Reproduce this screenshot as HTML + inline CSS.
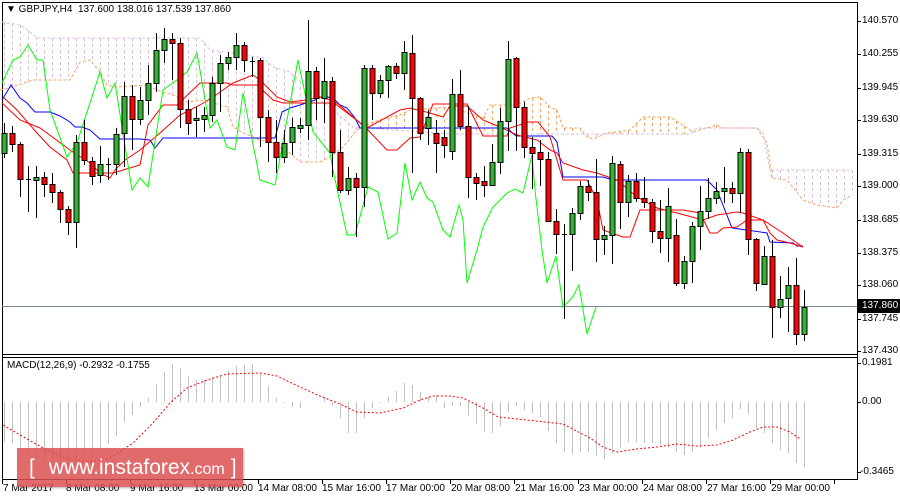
<!DOCTYPE html>
<html><head><meta charset="utf-8"><style>
html,body{margin:0;padding:0;background:#fff;width:900px;height:500px;overflow:hidden}
body{position:relative;font-family:"Liberation Sans",sans-serif;font-size:10px;color:#000}
svg{position:absolute;left:0;top:0}
.t{position:absolute;white-space:nowrap;font-size:10px;line-height:10px}
#wm{position:absolute;left:17px;top:448px;width:226px;height:39px;background:rgba(220,80,80,0.85);box-shadow:1px 1px 2px rgba(0,0,0,0.3);color:#fff;font-size:21px;line-height:39px;white-space:nowrap}
</style></head><body>
<svg id="s" width="900" height="500" xmlns="http://www.w3.org/2000/svg"></svg>
<div class="t" style="left:6px;top:5px;font-size:10px">&#9660; GBPJPY,H4&nbsp; 137.600 138.016 137.539 137.860</div>
<div class="t" style="left:7px;top:361px">MACD(12,26,9) -0.2932 -0.1755</div>
<div class="t" style="left:862px;top:16px">140.570</div>
<div class="t" style="left:862px;top:49px">140.255</div>
<div class="t" style="left:862px;top:83px">139.945</div>
<div class="t" style="left:862px;top:115px">139.630</div>
<div class="t" style="left:862px;top:149px">139.315</div>
<div class="t" style="left:862px;top:181px">139.000</div>
<div class="t" style="left:862px;top:215px">138.685</div>
<div class="t" style="left:862px;top:248px">138.375</div>
<div class="t" style="left:862px;top:280px">138.060</div>
<div class="t" style="left:862px;top:314px">137.745</div>
<div class="t" style="left:862px;top:346px">137.430</div>
<div style="position:absolute;left:858px;top:299px;width:42px;height:14px;background:#000"></div>
<div class="t" style="left:862px;top:301px;color:#fff">137.860</div>
<div class="t" style="left:862px;top:358px">0.1981</div>
<div class="t" style="left:862px;top:397px">0.00</div>
<div class="t" style="left:860px;top:467px">-0.3465</div>
<div class="t" style="left:3px;top:484px">7 Mar 2017</div>
<div class="t" style="left:66px;top:484px">8 Mar 08:00</div>
<div class="t" style="left:130px;top:484px">9 Mar 16:00</div>
<div class="t" style="left:194px;top:484px">13 Mar 00:00</div>
<div class="t" style="left:258px;top:484px">14 Mar 08:00</div>
<div class="t" style="left:322px;top:484px">15 Mar 16:00</div>
<div class="t" style="left:386px;top:484px">17 Mar 00:00</div>
<div class="t" style="left:451px;top:484px">20 Mar 08:00</div>
<div class="t" style="left:515px;top:484px">21 Mar 16:00</div>
<div class="t" style="left:579px;top:484px">23 Mar 00:00</div>
<div class="t" style="left:643px;top:484px">24 Mar 08:00</div>
<div class="t" style="left:707px;top:484px">27 Mar 16:00</div>
<div class="t" style="left:771px;top:484px">29 Mar 00:00</div>
<div id="wm"><span style="margin-left:12px">[</span><span style="margin-left:14px">www.instaforex</span><span style="font-size:16px">.com</span><span style="margin-left:6px">]</span></div>
<script>
var s=document.getElementById('s'),h='';
function L(x1,y1,x2,y2,c,w,d){h+='<line x1="'+x1+'" y1="'+y1+'" x2="'+x2+'" y2="'+y2+'" stroke="'+c+'" stroke-width="'+(w||1)+'"'+(d?' stroke-dasharray="'+d+'"':'')+'/>';}
function P(p,c,d){h+='<polyline fill="none" stroke="'+c+'" stroke-width="1"'+(d?' stroke-dasharray="'+d+'"':'')+' points="'+p.map(function(a){return a.join(',')}).join(' ')+'"/>';}
function interp(p,x){if(x<=p[0][0])return p[0][1];for(var i=1;i<p.length;i++){if(x<=p[i][0]){var a=p[i-1],b=p[i];return a[1]+(b[1]-a[1])*(x-a[0])/(b[0]-a[0]);}}return p[p.length-1][1];}
// frame
L(2.5,2,2.5,480,'#000');L(2,2.5,857,2.5,'#000');L(857.5,2,857.5,480,'#000');
L(2,354.5,857,354.5,'#000');L(2,357.5,857,357.5,'#000');L(2,479.5,857,479.5,'#000');
// ticks
[21,54,88,120,154,186,220,253,285,319,351,363,402,472].forEach(function(y){L(857,y+.5,861,y+.5,'#000')});
for(var k=0;k<14;k++){L(2.5+64*k,479,2.5+64*k,484,'#000');}
// cloud
var A=[[0,90],[13,87],[33,80],[70,80],[80,62],[90,60],[100,72],[107,85],[117,87],[147,85],[157,90],[173,95],[187,102],[203,100],[227,107],[233,127],[243,133],[260,140],[273,143],[290,153],[300,162],[320,162],[330,157],[343,147],[357,130],[373,122],[387,118],[400,115],[410,110],[450,107],[483,118],[490,105],[517,105],[530,98],[540,97],[550,107],[557,110],[563,128],[580,128],[587,137],[593,139],[607,133],[617,132],[630,130],[643,117],[670,117],[687,128],[693,132],[717,125],[723,128],[757,128],[767,143],[772,178],[787,180],[803,200],[817,205],[837,208],[843,200],[852,195]];
var B=[[2,22],[20,25],[30,32],[37,38],[200,38],[210,50],[233,53],[263,58],[273,67],[290,72],[317,97],[333,110],[353,127],[450,134],[690,134],[697,128],[757,128],[763,133],[770,170],[852,170]];
for(var x=4;x<=852;x+=8){var a=interp(A,x),b=interp(B,x);var c=a<b?'#f4a460':'#d8bfd8';L(x+.5,Math.min(a,b),x+.5,Math.max(a,b),c,1,'3,3');}
P(A,'#f4a460','3,2');P(B,'#d8bfd8','3,2');
// price line
L(2,306.5,857,306.5,'#778899');
// kijun
P([[2,100],[11,85],[20,98],[27,103],[35,112],[50,112],[60,116],[70,122],[75,127],[82,127],[90,130],[100,139],[140,139],[150,140],[155,148],[163,138],[275,138],[282,112],[290,108],[300,105],[315,100],[320,97],[328,97],[335,100],[340,105],[347,108],[355,118],[360,128],[507,128],[516,136],[552,136],[557,142],[563,177],[603,177],[613,180],[707,180],[717,190],[732,228],[747,230],[767,233],[770,242],[793,243],[797,246],[803,246]],'#0000ff');
// reds
P([[3,97],[17,110],[37,133],[50,147],[67,160],[73,173],[113,173],[140,165],[148,125],[163,105],[177,105],[200,83],[227,83],[233,85],[257,85],[273,100],[283,103],[337,103],[367,129],[387,150],[397,150],[410,138],[420,137],[433,104],[467,104],[483,136],[507,136],[510,128],[528,122],[538,122],[550,137],[563,180],[587,180],[597,200],[603,230],[623,237],[630,237],[640,210],[683,210],[700,213],[710,233],[717,233],[723,228],[737,227],[747,220],[763,220],[770,233],[777,240],[790,243],[803,247]],'#ff0000');
P([[2,103],[20,120],[40,128],[70,150],[90,163],[100,173],[110,178],[115,170],[125,160],[140,150],[160,133],[180,115],[200,105],[213,97],[233,83],[253,75],[260,80],[277,97],[290,102],[307,100],[320,97],[330,100],[367,128],[400,110],[410,108],[430,113],[443,117],[450,106],[467,106],[483,120],[500,127],[517,135],[537,140],[550,150],[557,153],[563,163],[583,170],[597,173],[617,180],[637,197],[657,208],[677,213],[703,220],[717,215],[737,212],[743,213],[763,220],[783,233],[797,243],[803,247]],'#ff0000');
// chikou
P([[2,83],[13,60],[20,57],[28,45],[37,60],[43,60],[50,110],[67,157],[77,143],[100,72],[107,98],[115,83],[132,190],[140,178],[148,187],[163,90],[177,80],[187,72],[197,53],[210,128],[217,120],[227,147],[235,150],[243,93],[260,180],[275,185],[298,60],[313,132],[330,153],[333,170],[347,235],[355,235],[368,187],[378,192],[388,239],[397,233],[405,163],[412,200],[420,182],[427,198],[433,202],[443,230],[450,237],[459,205],[463,220],[467,283],[477,250],[483,227],[493,207],[507,193],[515,189],[523,193],[532,155],[535,190],[542,250],[547,283],[556,256],[563,307],[572,298],[579,285],[587,334],[596,307]],'#00ff00');
// candles [bt,bb,wt,wb,g]
var C=[[133,153,123,158,1],[133,144,126,152,0],[144,179,142,197,0],[179,179,166,212,2],[177,180,166,218,1],[177,184,172,197,0],[184,192,173,203,0],[192,209,190,223,0],[209,222,206,235,0],[142,222,135,248,1],
[142,160,120,165,0],[161,176,157,185,0],[164,175,146,183,1],[164,164,158,180,2],[134,164,128,175,1],[96,133,82,167,1],[96,119,85,150,0],[100,119,87,125,1],[83,100,65,115,1],[50,83,33,92,1],
[39,50,28,63,1],[39,43,33,80,0],[43,109,38,128,0],[109,123,100,135,0],[118,120,107,137,1],[115,119,107,132,1],[83,115,77,122,1],[63,83,55,112,1],[57,63,52,70,1],[45,57,33,70,1],
[45,60,42,72,0],[61,61,57,77,2],[60,117,58,147,0],[117,142,110,162,0],[142,157,120,173,0],[143,157,130,163,1],[127,142,118,155,1],[125,128,118,133,1],[71,125,20,140,1],[71,98,67,120,0],
[81,98,58,123,1],[81,152,77,177,0],[152,190,130,193,0],[178,190,167,195,1],[178,187,173,237,0],[68,187,65,207,1],[68,93,65,120,0],[80,93,75,98,1],[66,80,65,98,1],[66,73,63,79,0],
[52,73,41,90,1],[53,98,35,173,0],[98,133,97,140,0],[117,128,110,145,1],[133,143,120,173,0],[137,145,130,158,0],[94,151,79,160,1],[94,126,70,130,0],[126,177,106,198,0],[177,183,173,200,0],
[181,185,166,197,0],[162,185,144,185,1],[121,162,108,174,1],[59,121,41,151,1],[58,107,57,151,0],[107,147,102,158,0],[147,153,137,189,0],[152,159,140,186,0],[159,221,152,221,0],[221,234,209,254,0],
[234,234,224,319,2],[213,234,208,271,1],[186,213,181,220,1],[186,192,180,201,0],[192,239,159,262,0],[235,239,226,255,1],[163,235,156,264,1],[164,202,161,229,0],[181,202,175,217,1],[181,198,173,202,0],
[198,202,177,208,0],[202,231,199,243,0],[231,238,200,253,0],[206,238,188,262,1],[235,283,219,286,0],[261,283,256,289,1],[226,261,222,283,1],[211,226,186,250,1],[198,211,178,219,1],[191,198,182,204,1],
[188,191,167,203,1],[188,193,182,203,0],[152,193,148,213,1],[152,239,149,255,0],[239,283,238,291,0],[256,284,246,284,1],[256,307,240,338,0],[299,307,276,318,1],[285,298,267,332,1],[285,334,258,345,0],[307,334,290,341,1]];
C.forEach(function(c,i){var x=4+8*i+.5;L(x,c[2],x,c[3],'#000');
if(c[4]==2){L(x-2.5,c[0]+.5,x+2.5,c[0]+.5,'#000');}
else{h+='<rect x="'+(x-2.5)+'" y="'+(c[0]+.5)+'" width="5" height="'+Math.max(1,c[1]-c[0])+'" fill="'+(c[4]?'#32b432':'#ff0000')+'" stroke="#000" stroke-width="1"/>';}});
// MACD hist
var M=[442,443,450,454,458,460,463,463,463,460,457,457,450,444,436,422,415,407,398,384,372,364,368,376,380,380,377,376,371,366,365,364,373,386,398,403,407,408,402,402,397,405,418,433,433,418,408,403,397,391,383,385,392,397,395,408,405,406,416,424,432,433,426,412,406,410,413,417,431,443,452,454,452,452,456,459,453,448,442,442,443,443,445,448,452,455,452,447,438,430,423,418,409,414,428,433,443,450,453,463,467];
M.forEach(function(v,i){var x=4+8*i+.5;L(x,402,x,v,'#c0c0c0');});
P([[3,425],[20,435],[43,448],[67,459],[87,462],[110,458],[133,443],[153,423],[170,403],[187,388],[207,380],[227,374],[260,373],[277,376],[300,387],[320,396],[340,404],[357,412],[380,413],[403,408],[420,400],[433,396],[450,396],[463,398],[483,408],[498,417],[527,420],[563,424],[590,438],[603,447],[617,452],[637,449],[657,447],[677,444],[697,446],[717,445],[733,440],[750,432],[763,427],[777,427],[790,432],[800,439]],'#ff0000','2,2');
s.innerHTML=h;
</script>
</body></html>
